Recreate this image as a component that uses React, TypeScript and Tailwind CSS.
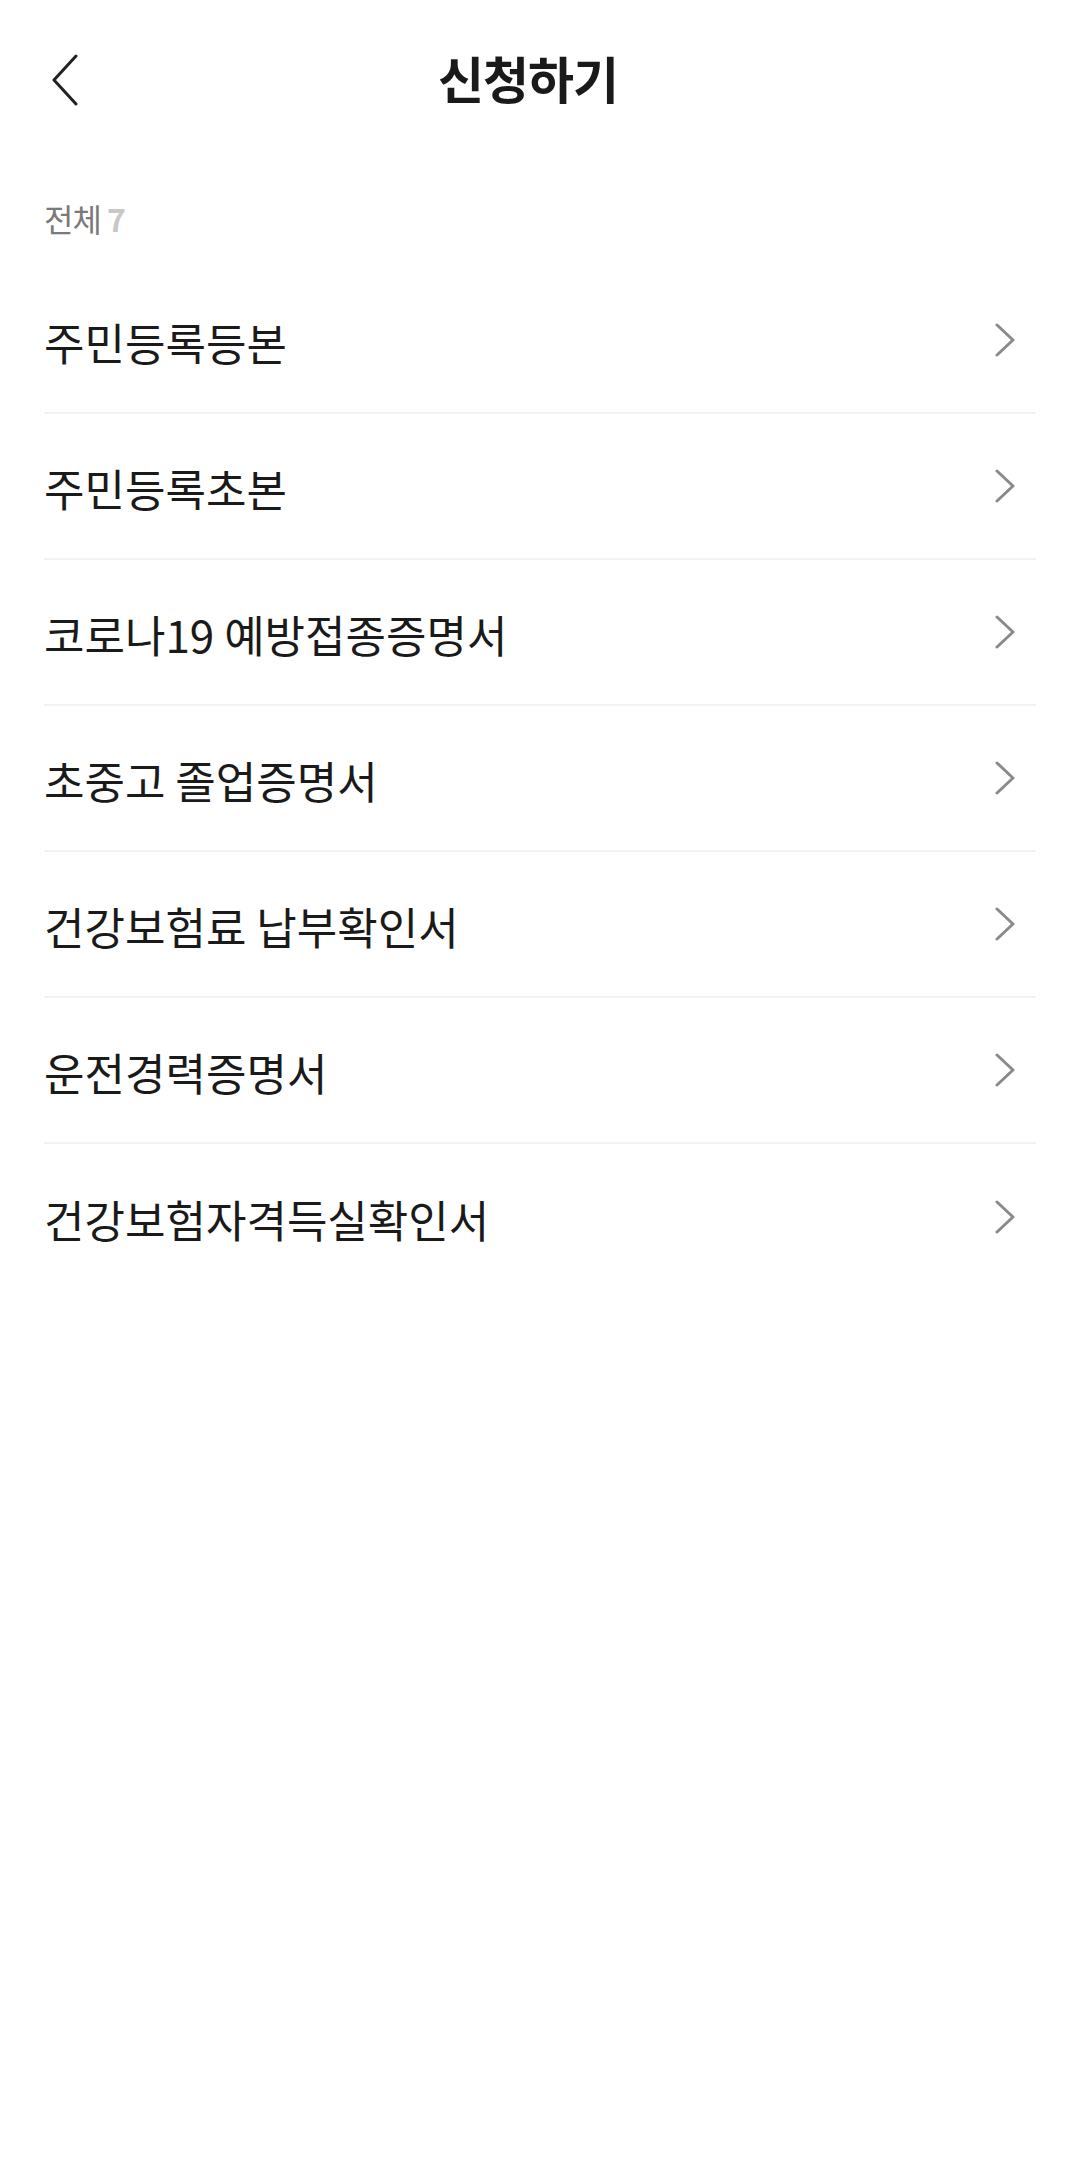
import React from 'react';

const items = [
    '주민등록등본',
    '주민등록초본',
    '코로나19 예방접종증명서',
    '초중고 졸업증명서',
    '건강보험료 납부확인서',
    '운전경력증명서',
    '건강보험자격득실확인서',
];

const font = { fontFamily: '"Noto Sans CJK KR", "Noto Sans", sans-serif' };

export default function App() {
    return (
        <div className="min-h-screen bg-white text-[#1a1a1a]" style={font}>
            <header className="relative flex h-[160px] items-center justify-center pb-[6px] pr-[24px]">
                <button className="absolute left-[44px] top-[50px] flex h-[60px] w-[40px] items-center justify-center">
                    <svg width="30" height="52" viewBox="0 0 30 52" fill="none">
                        <path d="M27 2 L5 26 L27 50" stroke="#222" strokeWidth="3" strokeLinecap="round" strokeLinejoin="round" />
                    </svg>
                </button>
                <h1 className="text-[50px] font-bold leading-none tracking-[-1px] text-[#1a1a1a]">신청하기</h1>
            </header>

            <div className="px-[44px]">
                <div className="flex h-[108px] items-center pt-[8px] text-[32px] leading-none">
                    <span className="tracking-[-1px] text-[#7a7a7a]">전체</span>
                    <span className="ml-[6px] font-bold text-[#c8c8c8]">7</span>
                </div>

                <ul>
                    {items.map((label, i) => (
                        <li
                            key={label}
                            className={`flex h-[146px] items-center justify-between pt-[4px] ${i < items.length - 1 ? 'border-b-2 border-[#f2f2f2]' : ''}`}
                        >
                            <span className="text-[44px] leading-none text-[#1a1a1a]">{label}</span>
                            <svg className="mb-[4px] mr-[21px]" width="20" height="34" viewBox="0 0 20 34" fill="none">
                                <path d="M2 2 L18 17 L2 32" stroke="#8a8a8a" strokeWidth="3" strokeLinecap="round" strokeLinejoin="round" />
                            </svg>
                        </li>
                    ))}
                </ul>
            </div>
        </div>
    );
}
